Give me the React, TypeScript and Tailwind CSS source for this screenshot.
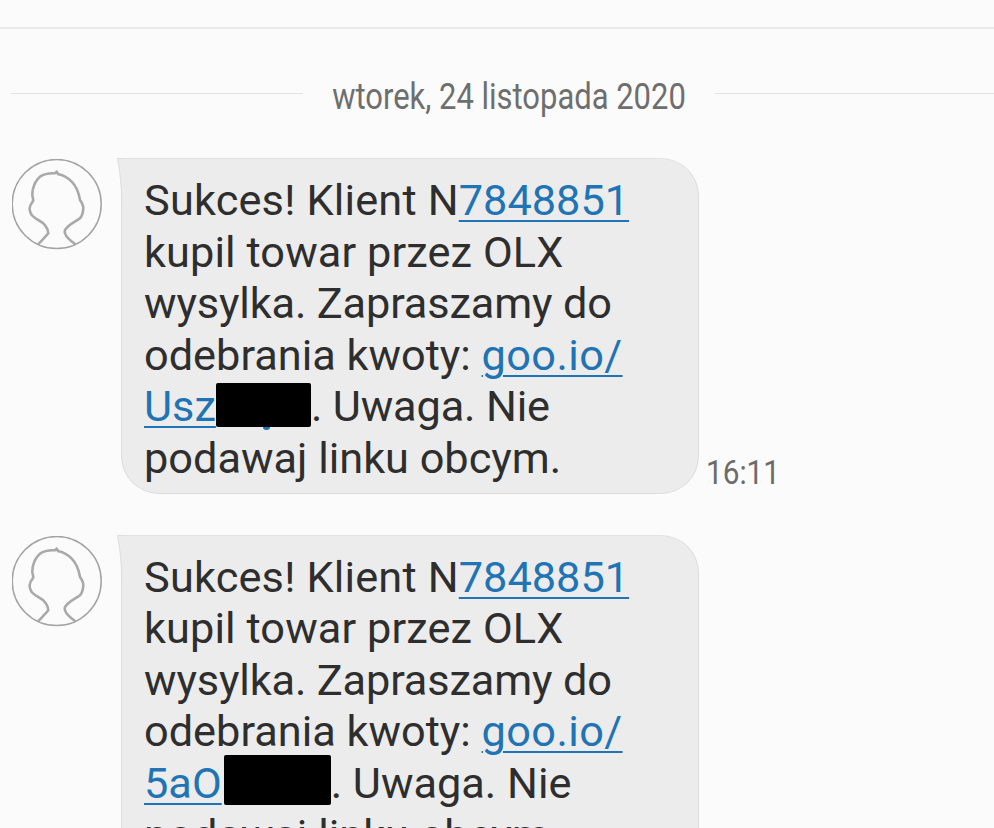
const Avatar = () => (
  <svg width="92" height="92" viewBox="0 0 92 92" fill="none" className="shrink-0" aria-hidden="true">
    <circle cx="44.7" cy="45" r="44.5" stroke="#a3a3a3" strokeWidth="1.5" />
    <path
      d="M26 85.5 C29 82 33 78.5 36.3 74.3 C36 70 34 67 31.3 64.3 C27 61 22 59 19.7 56 C18 53 17 50 18 47.7 C18.5 44 21 44 21.3 41 C20 37 20 34 20.7 31 C22 25 24 21 28 17.7 C32 15 38 14 43 14.3 L44.7 12.7 L46.3 15.3 C52 16 56 19 59.7 22.7 C65 28 67 35 68 41 C70 44 71.5 46 71.3 49.3 C71 54 70 57 68 59.3 C63 63 57 65 53 71 C52 74 54 77 56.3 79.3 C58.5 81.5 61 83.5 63.5 85.5"
      stroke="#a9a9a9"
      strokeWidth="2.6"
      strokeLinejoin="round"
      fill="none"
    />
  </svg>
);

const Link = ({ children, className = "" }: { children: React.ReactNode; className?: string }) => (
  <span className={`text-[#1f74b5] underline decoration-[2px] underline-offset-[5px] ${className}`}>{children}</span>
);

const Line = ({ children, className = "" }: { children: React.ReactNode; className?: string }) => (
  <div className={`h-[51.6px] leading-[51.6px] whitespace-nowrap ${className}`}>{children}</div>
);

const Message = ({
  code,
  slot,
  block,
  rest,
  restClass = "",
  time,
  tick,
}: {
  code: string;
  slot: string;
  block: string;
  rest: string;
  restClass?: string;
  time?: string;
  tick?: boolean;
}) => (
  <div className="flex items-end pl-[12px]">
    <div className="self-start pt-[1px]">
      <Avatar />
    </div>
    <div className="relative ml-[17px] w-[578px] shrink-0 rounded-[38px] rounded-tl-none border border-[#dcdcdc] border-t-[#e2e2e2] bg-[#ececec] pl-[22px] pt-[16px] pb-[8px] text-[#2e2e2e] text-[43.3px]">
      <svg width="8" height="46" viewBox="0 0 8 46" className="absolute left-[-5px] top-[-1px]" aria-hidden="true">
        <path d="M0 0 H8 V46 H5 C4.5 30 3 12 0 0 Z" fill="#ececec" />
        <path d="M8 0.5 H0.5 C3 12 4.5 30 5 46" fill="none" stroke="#dedede" strokeWidth="1" />
      </svg>
      <Line>
        <span className="tracking-[0.18px]">Sukces! Klient N</span>
        <Link>7848851</Link>
      </Line>
      <Line className="tracking-[0.1px]">kupil towar przez OLX</Line>
      <Line className="tracking-[-0.14px]">wysylka. Zapraszamy do</Line>
      <Line>
        odebrania kwoty: <Link className="tracking-[0.4px]">goo.io/</Link>
      </Line>
      <Line>
        <Link>{code}</Link>
        <span className={slot}>
          <span className={block} />
          {tick && <span className="absolute left-[47px] bottom-[-9px] h-[3px] w-[7px] rounded-b-[3px] bg-[#1f74b5]" />}
        </span>
        <span className={restClass}>{rest}</span>
      </Line>
      <Line>podawaj linku obcym.</Line>
    </div>
    {time && <span className="ml-[7px] mb-[1px] inline-block origin-left scale-x-[0.9] text-[33px] leading-[40px] text-[#6b6b6b]">{time}</span>}
  </div>
);

export default function App() {
  return (
    <div className="h-[828px] w-[994px] overflow-hidden bg-[#fbfbfb] font-['Roboto',sans-serif]">
      <div className="h-[29px] border-b-2 border-[#e8e8e8]" />
      <div className="flex h-[80px] items-center pl-[11px] pt-[54px]">
        <div className="mb-[6px] h-[1px] w-[292px] bg-[#e2e2e2]" />
        <span className="mt-[2px] w-[412px] scale-x-[0.86] whitespace-nowrap text-center text-[36px] leading-none text-[#6e6e6e]">wtorek, 24 listopada 2020</span>
        <div className="mb-[5px] h-[1px] flex-1 bg-[#e2e2e2]" />
      </div>
      <div className="flex flex-col gap-[41px] pt-[49px]">
        <Message
          code="Usz"
          slot="relative inline-block h-0 w-[95px]"
          block="absolute bottom-[-6px] left-0 h-[44px] w-[95px] rounded-[2px] bg-black"
          rest=". Uwaga. Nie"
          restClass="tracking-[-0.15px]"
          time="16:11"
          tick
        />
        <Message
          code="5aO"
          slot="relative ml-[2px] inline-block h-0 w-[107px]"
          block="absolute bottom-[-7px] left-0 h-[50px] w-[107px] rounded-[2px] bg-black"
          rest=". Uwaga. Nie"
        />
      </div>
    </div>
  );
}
